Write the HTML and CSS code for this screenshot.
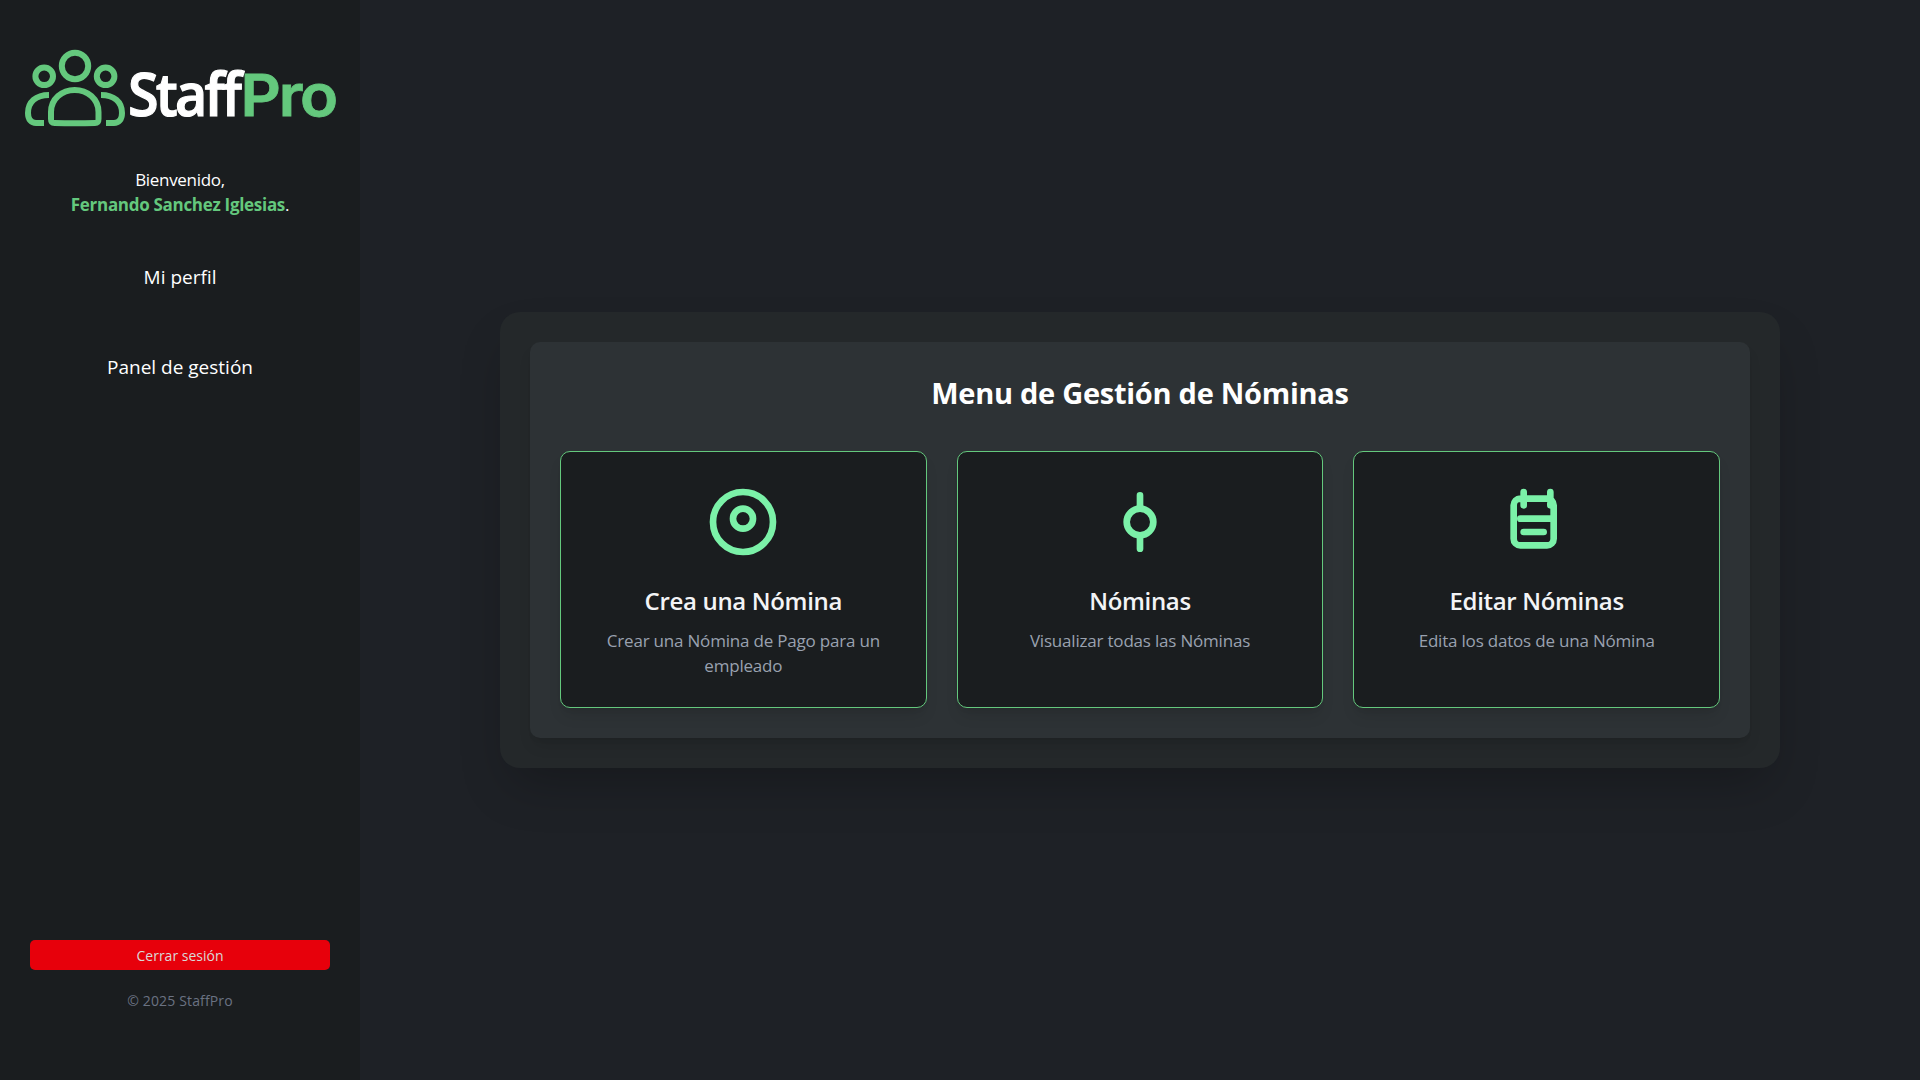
FILE: index.html
```html
<!DOCTYPE html>
<html lang="es">
<head>
<meta charset="utf-8">
<title>StaffPro</title>
<link rel="stylesheet" href="styles.css">
</head>
<body>
<div class="layout">
  <aside class="sidebar">
    <svg class="logo" viewBox="0 0 320 90" role="img" aria-label="StaffPro">
      <g class="logo-people">
        <circle cx="55" cy="26" r="13.2"/>
        <circle cx="24.2" cy="36.3" r="8.8"/>
        <circle cx="85.6" cy="36.3" r="8.8"/>
        <path d="M34.500 83Q31 83 31 79V72C31 59 42 49.900 54.700 49.900S78.500 59 78.500 72V79Q78.500 83 75 83Q55 83.600 34.500 83Z"/>
        <path d="M29 54.900C16 54.900 8 62 8 73C8 80 11.500 83 16 83H24"/>
        <path d="M81 54.900C94 54.900 102 62 102 73C102 80 98.500 83 94 83H86"/>
      </g>
      <text class="logo-staff" x="108" y="75.500" textLength="111" lengthAdjust="spacingAndGlyphs">Staff</text>
      <text class="logo-pro" x="220.500" y="75.500" textLength="95.500" lengthAdjust="spacingAndGlyphs">Pro</text>
    </svg>
    <p class="welcome"><span>Bienvenido,</span><br><strong>Fernando Sanchez Iglesias</strong>.</p>
    <nav class="nav">
      <a>Mi perfil</a>
      <a>Panel de gestión</a>
    </nav>
    <footer class="foot">
      <button class="logout">Cerrar sesión</button>
      <p class="copy">© 2025 StaffPro</p>
    </footer>
  </aside>
  <main class="main">
    <section class="panel">
      <div class="menu">
        <h1 class="title">Menu de Gestión de Nóminas</h1>
        <div class="cards">
          <article class="card">
            <svg class="icon" viewBox="0 0 24 24"><circle cx="12" cy="12" r="9"/><circle cx="12" cy="11" r="3"/></svg>
            <h2>Crea una Nómina</h2>
            <p>Crear una Nómina de Pago para un empleado</p>
          </article>
          <article class="card">
            <svg class="icon" viewBox="0 0 24 24"><circle cx="12" cy="12" r="4"/><path d="M12 4v4M12 16v4"/></svg>
            <h2>Nóminas</h2>
            <p>Visualizar todas las Nóminas</p>
          </article>
          <article class="card">
            <svg class="icon" viewBox="0 0 24 24"><path d="M7 5h8a2 2 0 0 1 2 2v10a2 2 0 0 1-2 2H7a2 2 0 0 1-2-2V7a2 2 0 0 1 2-2zM8 3v4M16 3v4M7 11h10M8 15h6"/></svg>
            <h2>Editar Nóminas</h2>
            <p>Edita los datos de una Nómina</p>
          </article>
        </div>
      </div>
    </section>
  </main>
</div>
</body>
</html>
```
FILE: styles.css
```css
* {
  box-sizing: border-box;
  margin: 0;
}

body {
  background: #1e2126;
  color: #fff;
  font: 17px/25px "Open Sans", "Noto Sans", sans-serif;
}

.layout {
  display: flex;
  height: 1080px;
}

.sidebar {
  width: 360px;
  padding: 40px 20px 60px;
  background: #1a1d1f;
  display: flex;
  flex-direction: column;
  align-items: center;
  text-align: center;
}

.logo {
  width: 320px;
  height: 90px;
  flex: none;
  overflow: visible;
}

.logo-people {
  fill: none;
  stroke: #64c87d;
  stroke-width: 6;
}

.logo-staff {
  font-size: 59px;
  font-weight: 600;
  letter-spacing: -3px;
  fill: #fff;
  stroke: #fff;
  stroke-width: 1.2;
}

.logo-pro {
  font-family: Inter, "Open Sans", sans-serif;
  font-size: 57.5px;
  font-weight: 600;
  letter-spacing: -2px;
  fill: #64c87d;
  stroke: #64c87d;
  stroke-width: 0.8;
}

.welcome {
  margin-top: 37px;
  letter-spacing: -0.3px;
}

.welcome strong {
  color: #64c87d;
  font-weight: 700;
  letter-spacing: -0.3px;
}

.nav {
  display: flex;
  flex-direction: column;
  gap: 60px;
  margin-top: 45px;
  font-size: 19px;
  line-height: 30px;
}

.foot {
  margin-top: auto;
  width: 100%;
  padding: 0 10px;
}

.logout {
  display: block;
  width: 100%;
  height: 30px;
  padding: 1px 0 0;
  border: 0;
  border-radius: 5px;
  background: #e7000b;
  color: #d8d8d8;
  font: 14px/29px "Open Sans", sans-serif;
}

.copy {
  margin: 16px 0 4px;
  font-size: 14px;
  line-height: 30px;
  letter-spacing: 0.15px;
  color: #6a7282;
}

.main {
  flex: 1;
  display: flex;
  align-items: center;
  justify-content: center;
}

.panel {
  width: 1280px;
  padding: 30px;
  border-radius: 20px;
  background: #24282a;
  box-shadow: 0 25px 50px -12px rgba(0, 0, 0, 0.25);
}

.menu {
  padding: 29px 30px 30px;
  border-radius: 10px;
  background: #2d3235;
  box-shadow: 0 10px 15px -3px rgba(0, 0, 0, 0.1), 0 4px 6px -4px rgba(0, 0, 0, 0.1);
}

.title {
  margin-bottom: 36px;
  font-size: 29px;
  font-weight: 700;
  line-height: 44px;
  letter-spacing: -0.27px;
  text-align: center;
}

.cards {
  display: grid;
  grid-template-columns: repeat(3, 1fr);
  gap: 30px;
}

.card {
  height: 257px;
  padding: 30px;
  border: 1px solid #64c87d;
  border-radius: 10px;
  background: #1a1d1f;
  text-align: center;
  box-shadow: 0 10px 15px -3px rgba(0, 0, 0, 0.1), 0 4px 6px -4px rgba(0, 0, 0, 0.1);
}

.icon {
  display: block;
  width: 80px;
  height: 80px;
  margin: 0 auto 21px;
  fill: none;
  stroke: #7bf1a8;
  stroke-width: 2;
  stroke-linecap: round;
  stroke-linejoin: round;
}

.card h2 {
  font-size: 24px;
  font-weight: 600;
  line-height: 36px;
  letter-spacing: -0.33px;
  color: #f3f4f6;
}

.card p {
  margin-top: 9px;
  letter-spacing: -0.2px;
  color: #99a1af;
}
```
